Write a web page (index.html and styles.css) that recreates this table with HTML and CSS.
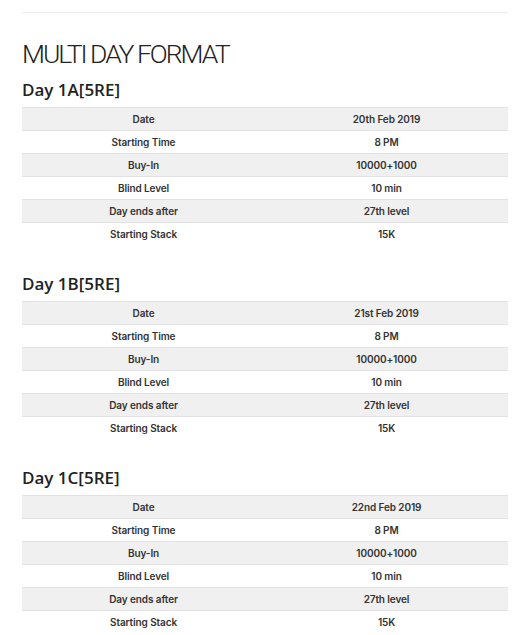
FILE: index.html
```html
<!DOCTYPE html>
<html>
<head>
<meta charset="utf-8">
<link rel="stylesheet" href="styles.css">
</head>
<body>
<div class="page">
  <hr class="rule">
  <h1 class="title">MULTI DAY FORMAT</h1>

  <section class="day">
    <h2 class="day-title">Day 1A[5RE]</h2>
    <table class="info">
      <tr><td>Date</td><td>20th Feb 2019</td></tr>
      <tr><td>Starting Time</td><td>8 PM</td></tr>
      <tr><td>Buy-In</td><td>10000+1000</td></tr>
      <tr><td>Blind Level</td><td>10 min</td></tr>
      <tr><td>Day ends after</td><td>27th level</td></tr>
      <tr><td>Starting Stack</td><td>15K</td></tr>
    </table>
  </section>

  <section class="day">
    <h2 class="day-title">Day 1B[5RE]</h2>
    <table class="info">
      <tr><td>Date</td><td>21st Feb 2019</td></tr>
      <tr><td>Starting Time</td><td>8 PM</td></tr>
      <tr><td>Buy-In</td><td>10000+1000</td></tr>
      <tr><td>Blind Level</td><td>10 min</td></tr>
      <tr><td>Day ends after</td><td>27th level</td></tr>
      <tr><td>Starting Stack</td><td>15K</td></tr>
    </table>
  </section>

  <section class="day">
    <h2 class="day-title">Day 1C[5RE]</h2>
    <table class="info">
      <tr><td>Date</td><td>22nd Feb 2019</td></tr>
      <tr><td>Starting Time</td><td>8 PM</td></tr>
      <tr><td>Buy-In</td><td>10000+1000</td></tr>
      <tr><td>Blind Level</td><td>10 min</td></tr>
      <tr><td>Day ends after</td><td>27th level</td></tr>
      <tr><td>Starting Stack</td><td>15K</td></tr>
    </table>
  </section>
</div>
</body>
</html>
```

FILE: styles.css
```css
html, body {
  margin: 0;
  padding: 0;
  background: #ffffff;
}

.page {
  width: 486px;
  margin: 0 0 0 22px;
  padding-top: 12px;
  color: #222;
}

.rule {
  margin: 0;
  border: 0;
  border-top: 1px solid #ececec;
  height: 0;
}

.title {
  margin: 24px 0 0 0;
  font-family: "Roboto", sans-serif;
  font-weight: 300;
  font-size: 26.5px;
  line-height: 33px;
  color: #222;
  letter-spacing: -2px;
}

.day + .day {
  margin-top: 27px;
}

.day-title {
  margin: 8px 0 0 0;
  font-family: "Open Sans", sans-serif;
  font-weight: 600;
  font-size: 17px;
  line-height: 24px;
  color: #222;
}

.info {
  margin-top: 5px;
  width: 100%;
  border-collapse: collapse;
  font-family: "Inter", sans-serif;
  font-weight: 600;
  font-size: 10px;
  letter-spacing: -0.1px;
  color: #333;
}

.info td {
  width: 50%;
  text-align: center;
  height: 22px;
  padding: 0;
  border-top: 1px solid #e2e2e2;
}

.info tr:nth-child(odd) td {
  background: #f0f0f0;
}
```
